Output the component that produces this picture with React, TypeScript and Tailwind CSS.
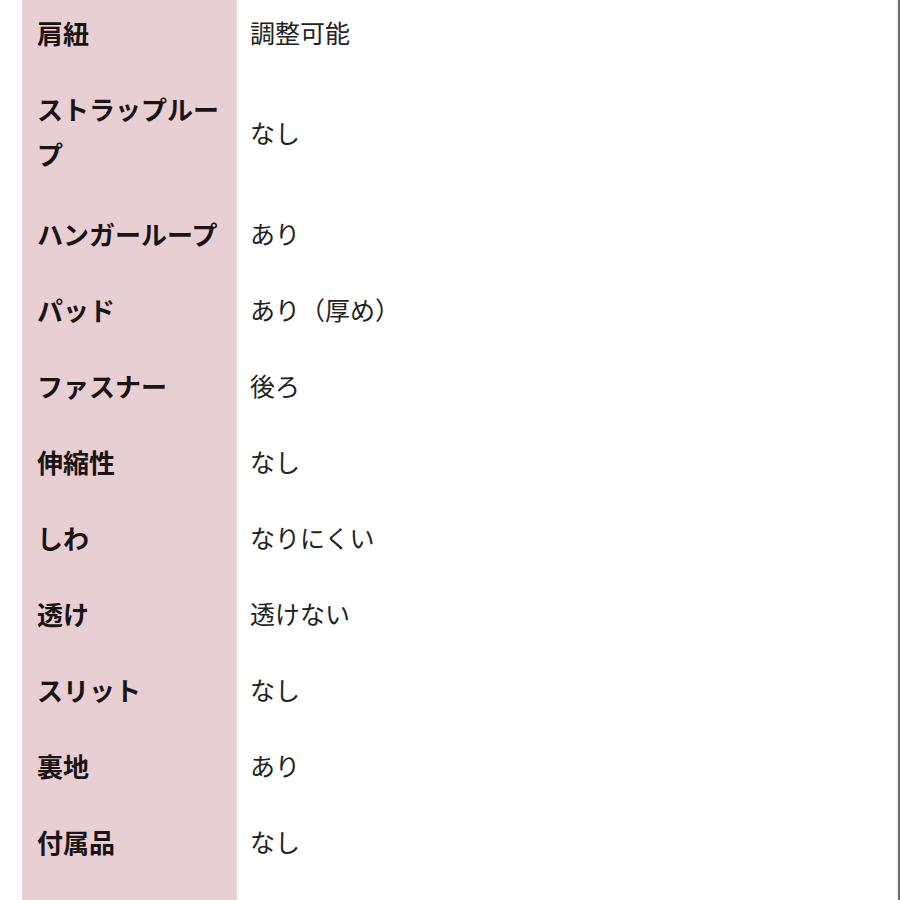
import React from "react";

const rows: { label: string; value: string; tall?: boolean }[] = [
  { label: "肩紐", value: "調整可能" },
  { label: "ストラップループ", value: "なし", tall: true },
  { label: "ハンガーループ", value: "あり" },
  { label: "パッド", value: "あり（厚め）" },
  { label: "ファスナー", value: "後ろ" },
  { label: "伸縮性", value: "なし" },
  { label: "しわ", value: "なりにくい" },
  { label: "透け", value: "透けない" },
  { label: "スリット", value: "なし" },
  { label: "裏地", value: "あり" },
  { label: "付属品", value: "なし" },
];

export default function App() {
  return (
    <div
      className="h-[900px] w-[900px] overflow-hidden bg-white flex"
      style={{ fontFamily: '"Noto Sans CJK JP", "Noto Sans", sans-serif' }}
    >
      <div className="w-[22px] shrink-0 bg-white" />
      <div className="flex-1 flex flex-col mt-[-6px]">
        {rows.map((r) => (
          <div key={r.label} className="grid grid-cols-[215px_1fr]">
            <div
              className={
                r.tall
                  ? "bg-[#e8cfd4] pl-[15px] pr-[8px] pt-[16px] pb-[19px] text-[26px] leading-[45px] font-bold text-[#1a1414]"
                  : "bg-[#e8cfd4] pl-[15px] pr-[8px] py-[15.5px] text-[26px] leading-[45px] font-bold text-[#1a1414]"
              }
            >
              {r.label}
            </div>
            <div className="bg-white pl-[13px] flex items-center text-[25px] leading-[45px] text-[#222222]">
              {r.value}
            </div>
          </div>
        ))}
        <div className="grid grid-cols-[215px_1fr] flex-1">
          <div className="bg-[#e8cfd4]" />
          <div className="bg-white" />
        </div>
      </div>
      <div className="w-[2px] shrink-0 bg-[#f4f4f4]" />
      <div className="w-[2px] shrink-0 bg-[#6e6e6e]" />
    </div>
  );
}
